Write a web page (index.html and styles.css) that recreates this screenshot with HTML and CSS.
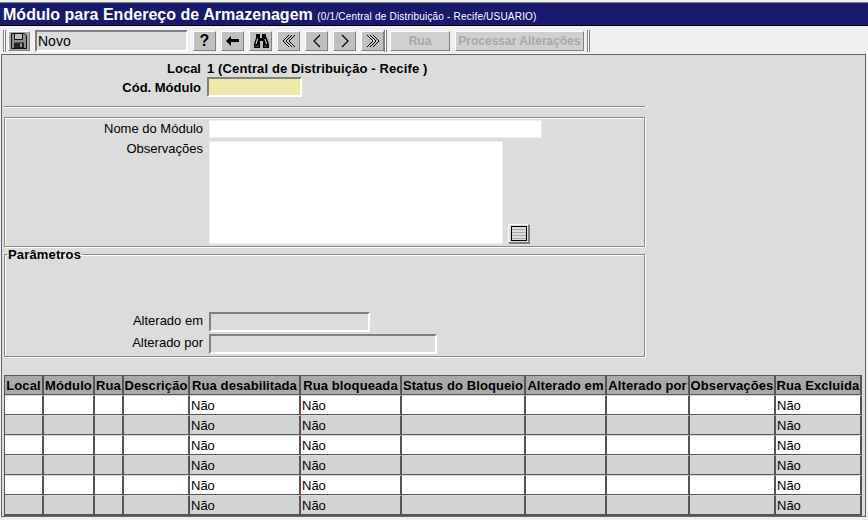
FILE: index.html
```html
<!DOCTYPE html>
<html lang="pt-BR">
<head>
  <meta charset="UTF-8" />
  <title>Módulo para Endereço de Armazenagem</title>
  <link rel="stylesheet" href="styles.css">
</head>
<body>
  <h1 class="titlebar">Módulo para Endereço de Armazenagem <small>(0/1/Central de Distribuição - Recife/USUARIO)</small></h1>

  <div class="toolbar">
    <span class="sep"></span>
    <button class="tb save" title="Salvar">
      <svg width="16" height="16" viewBox="0 0 16 16"><path d="M.5.5h13l2 2v13H.5z" fill="#8c8c8c" stroke="#111"/><path d="M3.5.5h8v6h-8z" fill="#bdbdbd" stroke="#111"/><path d="M3 9.5h10V15H3z" fill="#222"/><path d="M9 10.5h2V14H9z" fill="#9a9a9a"/></svg>
    </button>
    <input class="status" type="text" value="Novo">
    <button class="tb help">?</button>
    <button class="tb">
      <svg width="13" height="10" viewBox="0 0 13 10"><path d="M0 5l5-5v3h8v3H5v4z" fill="#000"/></svg>
    </button>
    <button class="tb">
      <svg width="16" height="14" viewBox="0 0 16 14"><path d="M3 0h4v4h2V0h4v3l1 1 2 6v4h-6V7H7v7H1v-4l2-6z" fill="#000"/><path d="M4.500 5L3 10M12 5l1.500 5" fill="none" stroke="#e8e8e8"/><path d="M2 12h4M11 12h3" fill="none" stroke="#666"/></svg>
    </button>
    <button class="tb">
      <svg width="14" height="14" viewBox="0 0 14 14"><path d="M7 1L1 7l6 6M10 1L4 7l6 6M13 1L7 7l6 6" fill="none" stroke="#000"/></svg>
    </button>
    <button class="tb">
      <svg width="10" height="14" viewBox="0 0 10 14"><path d="M8 1L2 7l6 6" fill="none" stroke="#000" stroke-width="1.2"/></svg>
    </button>
    <button class="tb">
      <svg width="10" height="14" viewBox="0 0 10 14"><path d="M2 1l6 6-6 6" fill="none" stroke="#000" stroke-width="1.2"/></svg>
    </button>
    <button class="tb">
      <svg width="14" height="14" viewBox="0 0 14 14"><path d="M7 1l6 6-6 6M4 1l6 6-6 6M1 1l6 6-6 6" fill="none" stroke="#000"/></svg>
    </button>
    <span class="sep"></span>
    <button class="tb text rua" disabled>Rua</button>
    <button class="tb text processar" disabled>Processar Alterações</button>
    <span class="sep"></span>
  </div>

  <main class="frame">
    <div class="head">
      <div class="row row-local">
        <label>Local</label>
        <span class="local-nome">1 (Central de Distribuição - Recife )</span>
      </div>
      <div class="row row-cod">
        <label>Cód. Módulo</label>
        <input class="cod" type="text">
      </div>
    </div>
    <hr class="rule">

    <fieldset class="box box-dados">
      <div class="row row-nome">
        <label>Nome do Módulo</label>
        <input class="field nome" type="text">
      </div>
      <div class="row row-obs">
        <label>Observações</label>
        <textarea class="field obs"></textarea>
        <button class="edit" title="Editor"><span></span></button>
      </div>
    </fieldset>

    <fieldset class="box box-param">
      <legend>Parâmetros</legend>
      <div class="row">
        <label>Alterado em</label>
        <input class="field ro em" type="text" readonly>
      </div>
      <div class="row">
        <label>Alterado por</label>
        <input class="field ro por" type="text" readonly>
      </div>
    </fieldset>

    <table class="grid">
      <colgroup>
        <col style="width:39px"><col style="width:51px"><col style="width:29px"><col style="width:66px">
        <col style="width:111px"><col style="width:101px"><col style="width:124px"><col style="width:81px">
        <col style="width:83px"><col style="width:86px"><col style="width:86px">
      </colgroup>
      <thead>
        <tr>
          <th>Local</th><th>Módulo</th><th>Rua</th><th>Descrição</th><th>Rua desabilitada</th><th>Rua bloqueada</th>
          <th>Status do Bloqueio</th><th>Alterado em</th><th>Alterado por</th><th>Observações</th><th>Rua Excluida</th>
        </tr>
      </thead>
      <tbody>
        <tr><td></td><td></td><td></td><td></td><td>Não</td><td>Não</td><td></td><td></td><td></td><td></td><td>Não</td></tr>
        <tr><td></td><td></td><td></td><td></td><td>Não</td><td>Não</td><td></td><td></td><td></td><td></td><td>Não</td></tr>
        <tr><td></td><td></td><td></td><td></td><td>Não</td><td>Não</td><td></td><td></td><td></td><td></td><td>Não</td></tr>
        <tr><td></td><td></td><td></td><td></td><td>Não</td><td>Não</td><td></td><td></td><td></td><td></td><td>Não</td></tr>
        <tr><td></td><td></td><td></td><td></td><td>Não</td><td>Não</td><td></td><td></td><td></td><td></td><td>Não</td></tr>
        <tr><td></td><td></td><td></td><td></td><td>Não</td><td>Não</td><td></td><td></td><td></td><td></td><td>Não</td></tr>
      </tbody>
    </table>
  </main>
</body>
</html>
```

FILE: styles.css
```css
html, body { margin: 0; padding: 0; height: 520px; overflow: hidden; }
body { font-family: "Liberation Sans", Arial, sans-serif; font-size: 13px; color: #000; background: #f0f0f0; }

.titlebar {
  margin: 0; padding: 1px 0 0 3px; height: 24px; line-height: 22px; margin-top: 2px;
  background: #191970; color: #fff; font-size: 16px; font-weight: bold; letter-spacing: .03px; white-space: nowrap;
  border-top: 1px solid #808080; box-sizing: border-box; border-bottom: 1px solid #000;
}
.titlebar small { font-size: 10px; font-weight: normal; letter-spacing: .2px; }

.toolbar { display: flex; align-items: center; height: 28px; padding: 2px 0 0 3px; box-sizing: border-box; background: #f0f0f0; }
.sep { width: 1px; height: 22px; border-left: 1px solid #808080; border-right: 1px solid #808080; background: #fff; flex: none; }
.tb {
  width: 23px; height: 20px; padding: 0; margin-left: 5px; flex: none; background: #c0c0c0;
  border: 1px solid; border-color: #fff #808080 #808080 #fff;
  display: flex; align-items: center; justify-content: center; font-family: inherit;
}
.save { width: 22px; margin-left: 2px; background: #a9a9a9; }
.help { font-size: 16px; font-weight: bold; }
.text { font-size: 12px; font-weight: bold; color: #a8a8a8; background: #d0d0d0; }
.rua { width: 60px; margin-left: 3px; }
.processar { width: 129px; }
.toolbar .sep:last-child { margin-left: 3px; }
.status {
  width: 153px; height: 22px; margin-left: 5px; margin-right: 0; padding: 0 1px; box-sizing: border-box; flex: none;
  background: #dcdcdc; border: 2px solid; border-color: #808080 #fff #fff #808080;
  font: 14px "Liberation Sans", Arial, sans-serif;
}

.frame {
  height: 463px; box-sizing: border-box; margin: 0 2px 0 1px; background: #dcdcdc;
  border: 1px solid #666; padding: 5px 3px 0 2px; outline: 1px solid #f0f0f0;
}

.row { display: grid; grid-template-columns: 198px auto; column-gap: 6px; justify-content: start; }
.row label { text-align: right; }
.head { font-size: 13px; font-weight: bold; }
.head .row { grid-template-columns: 197px auto; column-gap: 6px; align-items: center; }
.row-local { height: 17px; }
.local-nome { letter-spacing: .12px; }
.row-cod { margin-top: 0; }
.cod {
  width: 95px; height: 20px; box-sizing: border-box; background: #eee8aa;
  border: 2px solid; border-color: #808080 #fff #fff #808080; padding: 0;
}

.rule { margin: 9px 0 0; width: 641px; height: 0; border: 0; border-top: 1px solid #8c8c78; border-bottom: 1px solid #fff; }

.box {
  width: 641px; margin: 9px 0 0; padding: 2px 0 0; box-sizing: border-box; min-width: 0;
  border: 1px solid #8c8c78; box-shadow: 1px 1px 0 #fff, inset 1px 1px 0 #fff;
}
.box .row { margin-bottom: 2px; align-items: start; }
.box-dados { height: 130px; }
.row-nome { margin-bottom: 3px !important; }
.row-nome label { padding-top: 1px; }
.box-param { height: 111px; margin-top: -1px; padding-top: 50px; }
.box-param .row { align-items: center; }
.box-param .row label { padding-bottom: 4px; }
.box-param legend { padding: 2px 1px 0; margin-left: 2px; font-size: 13px; font-weight: bold; letter-spacing: .15px; line-height: 14px; color: #000; }

.field { display: block; box-sizing: border-box; padding: 0; background: #fff; border: 1px solid #eee; font: inherit; resize: none; }
.nome { width: 333px; height: 18px; }
.row-obs { grid-template-columns: 198px 293px auto; }
.obs { width: 294px; height: 103px; }
.edit {
  width: 21px; height: 19px; margin: 83px 0 0 0; padding: 0; background: #dcdcdc;
  border: 1px solid; border-color: #fff #808080 #808080 #fff; box-shadow: 1px 1px 0 #808080;
  display: flex; align-items: center; justify-content: center;
}
.edit span {
  display: block; width: 16px; height: 15px; border: 1px solid #000; box-sizing: border-box;
  background: repeating-linear-gradient(#dcdcdc 0 2px, #aaa 2px 3px);
}
.ro { height: 20px; background: #dcdcdc; border: 2px solid; border-color: #808080 #fff #fff #808080; }
.em { width: 161px; }
.por { width: 228px; }

.grid {
  table-layout: fixed; width: 858px; margin-top: 18px; border-collapse: separate; border-spacing: 0;
  border-left: 1px solid #555; border-top: 1px solid #555; border-bottom: 1px solid #555;
}
.grid th, .grid td { padding: 0 1px; box-sizing: content-box; border-right: 2px solid #555; border-bottom: 1px solid #555; overflow: hidden; white-space: nowrap; text-align: left; }
.grid th { height: 18px; padding: 0; background: #a9a9a9; font-size: 13px; font-weight: bold; letter-spacing: .1px; text-align: center; }
.grid td { height: 18px; border-top: 1px solid #ddd; }
.grid tbody tr:nth-child(odd) td { background: #fff; }
.grid tbody tr:nth-child(even) td { background: #d3d3d3; }
```
